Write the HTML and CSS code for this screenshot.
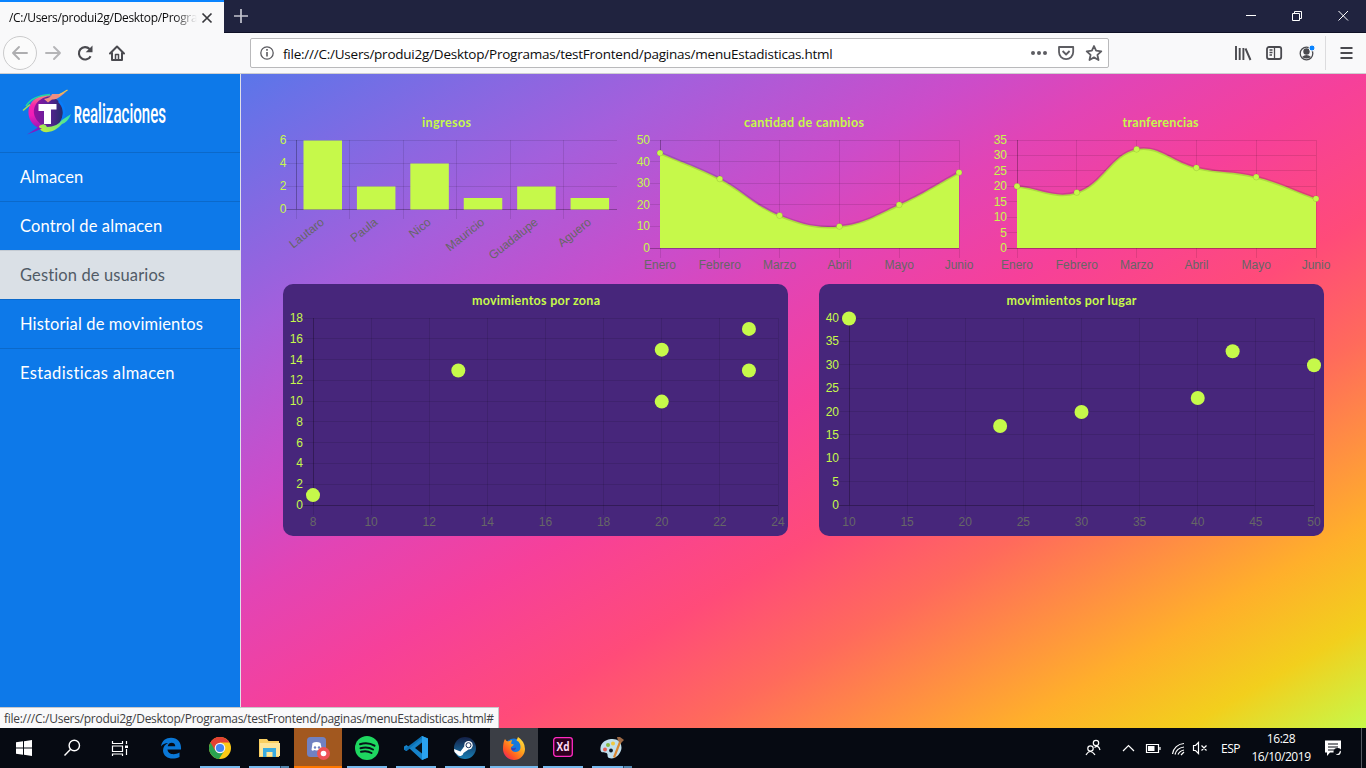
FILE: index.html
```html
<!DOCTYPE html>
<html lang="es">
<head>
<meta charset="utf-8">
<title>menuEstadisticas</title>
<link rel="stylesheet" href="styles.css">
</head>
<body>
<div class="screen">
  <header class="titlebar">
    <div class="tab"><span class="tab-title">/C:/Users/produi2g/Desktop/Progra</span>
      <svg class="tab-close" width="12" height="12" viewBox="0 0 12 12"><path d="M1.5 1.5l9 9M10.5 1.5l-9 9" stroke="#38383d" stroke-width="1.7"/></svg>
    </div>
    <svg class="new-tab" width="14" height="14" viewBox="0 0 14 14"><path d="M7 0v14M0 7h14" stroke="#c4c5cf" stroke-width="1.7"/></svg>
    <svg class="window-buttons" width="104" height="12" viewBox="0 0 104 12" fill="none" stroke="#fff" stroke-width="1"><path d="M0 5.5h10M46.500 3.500h7v7h-7zM48.500 3v-1.500h7v7h-2M92.500 1l9.500 9.500M102 1l-9.500 9.500"/></svg>
  </header>
  <nav class="toolbar">
    <span class="back"><svg width="18" height="18" viewBox="0 0 18 18" fill="none" stroke="#aeaeb0" stroke-width="1.9" stroke-linecap="round" stroke-linejoin="round"><path d="M16 9H2M8 3L2 9l6 6"/></svg></span>
    <svg class="nav-icon forward" width="18" height="18" viewBox="0 0 18 18" fill="none" stroke="#b5b5b7" stroke-width="1.9" stroke-linecap="round" stroke-linejoin="round"><path d="M2 9h14M10 3l6 6-6 6"/></svg>
    <svg class="nav-icon reload" width="18" height="18" viewBox="0 0 18 18"><path d="M14.600 12.200A6.200 6.200 0 1 1 13.600 5" fill="none" stroke="#4a4a4f" stroke-width="2.100"/><path d="M16.500 1.500v6.800H9.700z" fill="#4a4a4f"/></svg>
    <svg class="nav-icon home" width="18" height="18" viewBox="0 0 18 18" fill="none" stroke="#4a4a4f" stroke-width="2" stroke-linejoin="round" stroke-linecap="round"><path d="M2 9.500L9 2.500l7 7M4 8.500v7.500h10V8.500"/><path d="M7.500 15.500v-5h3v5" stroke-width="1.500"/></svg>
    <div class="urlbar">
      <svg class="info" width="14" height="14" viewBox="0 0 14 14"><circle cx="7" cy="7" r="6.200" fill="none" stroke="#5b5b60" stroke-width="1.300"/><path d="M7 6v4.500M7 3v1.700" stroke="#5b5b60" stroke-width="1.600"/></svg>
      <span class="url">file:///C:/Users/produi2g/Desktop/Programas/testFrontend/paginas/menuEstadisticas.html</span>
      <svg class="url-actions" width="74" height="18" viewBox="0 0 74 18" fill="none" stroke="#5d5d62" stroke-width="1.800" stroke-linejoin="round"><g fill="#5d5d62" stroke="none"><circle cx="3" cy="9" r="2"/><circle cx="9" cy="9" r="2"/><circle cx="15" cy="9" r="2"/></g><path d="M29 3h14.200v5a7.100 7.100 0 0 1-14.200 0zM32.600 7l3.500 3.500L39.600 7"/><path d="M64 2l2.100 4.700 5.200.6-3.900 3.500 1.100 5.200L64 13.400 59.500 16l1.100-5.200-3.900-3.500 5.200-.6z"/></svg>
    </div>
    <svg class="tool-icons" width="82" height="18" viewBox="0 0 82 18" fill="none" stroke="#4a4a4f">
      <path d="M2 2v14M5.700 4v12M9.400 4v12M11.500 4.500l5 11.500" stroke-width="1.900"/>
      <rect x="33" y="3" width="14.200" height="12" rx="2" stroke-width="1.800"/><path d="M40.500 3v12M35.500 6h3M35.500 8.500h3M35.500 11h2.500" stroke-width="1.300"/>
      <circle cx="72.500" cy="9.500" r="6.300" stroke-width="1.300"/><circle cx="72.500" cy="7.500" r="3.200" fill="#4a4a4f" stroke="none"/><path d="M68 13q4.500-4 9 0q-4.500 3-9 0z" fill="#4a4a4f" stroke="none"/><circle cx="78" cy="4" r="3" fill="#0a84ff" stroke="#f9f9fa"/>
    </svg>
    <i class="divider"></i>
    <svg class="menu-icon" width="13" height="14" viewBox="0 0 13 14"><path d="M.5 2h12M.5 7h12M.5 12h12" stroke="#4a4a4f" stroke-width="2"/></svg>
  </nav>
  <div class="page">
    <aside class="sidebar">
      <div class="brand">
        <svg width="220" height="60" viewBox="10 82 220 60">
          <defs>
            <linearGradient id="disc" x1="0" x2="1"><stop offset="0" stop-color="#a50c9e"/><stop offset=".5" stop-color="#63209c"/><stop offset="1" stop-color="#242c68"/></linearGradient>
            <linearGradient id="arc" x1="0" x2="0" y1="0" y2="1"><stop offset="0" stop-color="#f58b78"/><stop offset=".3" stop-color="#f424ae"/><stop offset=".6" stop-color="#f01cb8"/><stop offset="1" stop-color="#8f19b7"/></linearGradient>
            <linearGradient id="lime" x1="0" x2="1" y1="1" y2="0"><stop offset="0" stop-color="#c8ec38"/><stop offset="1" stop-color="#25e1b6"/></linearGradient>
          </defs>
          <circle cx="46.500" cy="112.500" r="16.500" fill="url(#disc)"/>
          <path d="M59 101q9 9 2 22" fill="none" stroke="#097df9" stroke-width="2.500"/>
          <path d="M41 129C26 124 25 106 35 99Q43 93 52 96Q42 96 36 104Q29 116 44 127z" fill="url(#arc)"/>
          <path d="M26 106Q32 96 50 94.500" fill="none" stroke="#20d5a6" stroke-width="1.500"/>
          <path d="M23 110.500l7-6" stroke="#a5e054" stroke-width="1.600"/>
          <path d="M44 99q7-1 8-5l7 0 7-2-5 4q-5 4-9 3.500l-4 3z" fill="#ef8e82"/><path d="M59 95l8.500-5" stroke="#f2c54c" stroke-width="1.300"/>
          <path d="M39 126q6-4 8 1 10 0 15-7l9-6q-3 8-9 10-6 7-14 8-8 1-9-6z" fill="url(#lime)"/>
          <path d="M27 134.500l11-7 4 1-7 3z" fill="#821bc2"/>
          <path d="M38.500 104h18v5.500h-5.500v14.500h-7v-13h-5.500z" fill="#fff"/>
          <text class="brand-text" x="74" y="122.500" textLength="92" lengthAdjust="spacingAndGlyphs"><tspan class="brand-initial">R</tspan>ealizaciones</text>
        </svg>
      </div>
      <a class="item">Almacen</a>
      <a class="item">Control de almacen</a>
      <a class="item active">Gestion de usuarios</a>
      <a class="item">Historial de movimientos</a>
      <a class="item last">Estadisticas almacen</a>
    </aside>
    <main class="content">
      <section class="row-top">
        <svg id="ingresos" class="chart" width="357" height="175" viewBox="268 109 357 175"></svg>
        <svg id="cambios" class="chart" width="357" height="175" viewBox="625 109 357 175"></svg>
        <svg id="tranferencias" class="chart" width="357" height="175" viewBox="982 109 357 175"></svg>
      </section>
      <section class="row-bottom">
        <svg id="zona" class="chart card" width="505" height="252" viewBox="283 284 505 252"></svg>
        <svg id="lugar" class="chart card" width="505" height="252" viewBox="819 284 505 252"></svg>
      </section>
    </main>
    <div class="status">file:///C:/Users/produi2g/Desktop/Programas/testFrontend/paginas/menuEstadisticas.html#</div>
  </div>
  <footer class="taskbar">
    <div class="system">
      <span class="sys"><svg width="16" height="16" viewBox="0 0 16 16" fill="#fff"><path d="M0 2.300l7-1v6.300H0zM8 1.200L16 0v7.600H8zM0 8.600h7v6.200l-7-1zM8 8.600h8V16l-8-1.200z"/></svg></span>
      <span class="sys"><svg width="18" height="18" viewBox="0 0 18 18" fill="none" stroke="#fff" stroke-width="1.400"><circle cx="11.300" cy="6.500" r="5.200"/><path d="M7.600 10.200L1.500 16.500"/></svg></span>
      <span class="sys"><svg width="18" height="18" viewBox="0 0 18 18" fill="none" stroke="#fff" stroke-width="1.200"><path d="M1.500 2v2.500h10V2M1.500 7h10v5.500h-10zM1.500 17v-2h10v2M15.500 2v3M15.500 10v6"/><path d="M14 6.500h3v2.500h-3z" fill="#fff" stroke="none"/></svg></span>
    </div>
    <div class="apps">
      <span class="app"><svg width="22" height="22" viewBox="0 0 22 22"><path d="M1 9.500C2 3.500 6 .8 11 .8c7 0 10.500 5 10 11.700H7.500c.3 5 7 6 12 3v4.500C12 23.500 3.500 21 3 13.800c0-4 2.200-6.600 5.200-7.800C4.900 6 2.500 7.500 1 9.500zM7.700 9.200h7.600c0-4.300-6.800-4.700-7.600 0z" fill="#0a78d7" fill-rule="evenodd"/></svg></span>
      <span class="app open"><svg width="22" height="22" viewBox="0 0 22 22"><circle cx="11" cy="11" r="11" fill="#fbc916"/><path d="M11 11L1.500 5.500A11 11 0 0 1 20.500 5.500H11z" fill="#e34133"/><path d="M1.500 5.500A11 11 0 0 0 10 22l5.500-8.400L11 11z" fill="#2aa350"/><path d="M6.300 13.700L1.500 5.500A11 11 0 0 1 11 0v6z" fill="#e34133"/><circle cx="11" cy="11" r="5.300" fill="#f4f4f4"/><circle cx="11" cy="11" r="4.100" fill="#4285f4"/></svg></span>
      <span class="app open stacked"><svg width="22" height="20" viewBox="0 0 22 20"><path d="M1 1h8l1.500 2H21v16H1z" fill="#f9cf61"/><path d="M2 5h20v13H2z" fill="#ffe69a"/><path d="M5 10h13v9h-3.500v-5h-6v5H5z" fill="#3aace0"/></svg></span>
      <span class="app alert"><svg width="24" height="24" viewBox="0 0 24 24"><rect x="1" y="1" width="19" height="20" rx="3.500" fill="#7181c1"/><path d="M5.500 14l1-7q4-1.800 8 0l1.500 7q-2 1.500-3 0-2.500.8-5 0-1 1.500-2.500 0z" fill="#fff"/><circle cx="9" cy="11.500" r="1.200" fill="#7181c1"/><circle cx="13" cy="11.500" r="1.200" fill="#7181c1"/><circle cx="17.500" cy="17.500" r="6.500" fill="#ef5256"/><circle cx="17.500" cy="17.500" r="2.800" fill="#fff"/></svg></span>
      <span class="app open"><svg width="24" height="24" viewBox="0 0 24 24"><circle cx="12" cy="12" r="12" fill="#1ed760"/><path d="M5 8.200q8-2.400 14.500 1.500M5.500 12.200q7-2 12.500 1.300M6 15.800q6-1.500 10.500 1.200" fill="none" stroke="#071118" stroke-width="2" stroke-linecap="round"/></svg></span>
      <span class="app open"><svg width="24" height="24" viewBox="0 0 24 24"><path d="M18 0l6 2.500v19L18 24 5.500 12.500 2.500 15 0 13.700v-3.200L2.500 9l3 2.500z" fill="#1683ca"/><path d="M18 6.500L11 12l7 5.500z" fill="#071018"/><path d="M18 0l6 2.500v19L18 24z" fill="#2aa2ef"/><path d="M0 13.500l2.500 1.500L18 2V0z" fill="#0c72b5"/></svg></span>
      <span class="app open"><svg width="22" height="22" viewBox="0 0 22 22"><defs><linearGradient id="st" x2="0" y2="1"><stop stop-color="#142047"/><stop offset="1" stop-color="#187eb4"/></linearGradient></defs><circle cx="11" cy="11" r="11" fill="url(#st)"/><path d="M0 12l6.500 2.500 4-5.500 4 3.500-5 3.500a3.500 3.500 0 0 1-6.500 1.200L.5 15z" fill="#fff"/><circle cx="14.500" cy="8.200" r="4.200" fill="#fff"/><circle cx="14.500" cy="8.200" r="2.500" fill="none" stroke="#17305a" stroke-width="1"/></svg></span>
      <span class="app open current"><svg width="22" height="23" viewBox="0 0 22 23"><defs><linearGradient id="ff" x1="1" x2=".1" y2="1"><stop stop-color="#fff14c"/><stop offset=".4" stop-color="#ffa71d"/><stop offset=".75" stop-color="#ff5423"/><stop offset="1" stop-color="#e71878"/></linearGradient></defs><circle cx="11" cy="11" r="9.500" fill="#1779dd"/><path d="M2 2q1 2 3 2.500Q8 3 9 3L8 6.500l3 1.300-3 2.400q0 5 5 4.800 6-1 4-8-1-3-3.500-3.500L15 0q7 4.500 7 12a11 11 0 0 1-22 0Q0 5 2 2z" fill="url(#ff)"/><path d="M8 10.500q2 1.500 5 0 0 2.500-3 3-2-.5-2-3z" fill="#3940b9"/></svg></span>
      <span class="app open"><svg class="raised" width="20" height="20" viewBox="0 0 20 20"><rect x=".7" y=".7" width="18.600" height="18.600" rx="2.500" fill="#2e001e" stroke="#ff2bc2" stroke-width="1.300"/><text class="xd" x="10" y="14" text-anchor="middle" textLength="13" lengthAdjust="spacingAndGlyphs">Xd</text></svg></span>
      <span class="app open stacked"><svg width="24" height="24" viewBox="0 0 24 24"><path d="M11 3C3 4 0 9 .5 14c.5 3.500 3.500 2 6 3 2 1.500 0 3.500 2.500 5 6 2 12-4 12.500-10C21.500 5 17 2.500 11 3z" fill="#c0dfed"/><circle cx="5" cy="13.500" r="2" fill="#e46053"/><circle cx="8" cy="9" r="2" fill="#85ba42"/><circle cx="13" cy="7.500" r="2" fill="#f0c93e"/><circle cx="11" cy="14.500" r="1.900" fill="#101a24"/><path d="M20 3l2 1-7 18-2-1z" fill="#da8732"/><path d="M17 1l3 0 4 3-3 3-3-2z" fill="#9b6946"/></svg></span>
    </div>
    <div class="tray">
      <svg class="tray-icons" width="128" height="24" viewBox="1085 736 128 24" fill="none" stroke="#fff" stroke-width="1.200">
        <circle cx="1096" cy="743" r="2.700"/><circle cx="1090.500" cy="748.500" r="2.700"/><path d="M1086 755q4-7 9 0M1094.500 747.500q4-3 5.500 2.500"/>
        <path d="M1123 751l5.500-5.500 5.500 5.500"/>
        <path d="M1146.500 744.500h12v8h-12zM1160 747v3"/><path d="M1148 746h6.500v5h-6.500z" fill="#fff" stroke="none"/>
        <path d="M1172.500 754A12 12 0 0 1 1184 743.500M1175 754.500q1.500-6.500 9-7.500M1178 754.500q1.500-3.500 6-4.500M1181 755l3-3"/>
        <path d="M1193.500 745.500h2l3-3v11l-3-3h-2zM1201.500 745.500l5 5M1206.500 745.500l-5 5"/>
      </svg>
      <span class="lang">ESP</span>
      <div class="clock"><span>16:28</span><span class="date">16/10/2019</span></div>
      <svg class="notes" width="17" height="17" viewBox="0 0 17 17"><path d="M0 .5h16v12H5L2 16v-3.500H0z" fill="#fff"/><path d="M3 4h10M3 7h10M3 10h6" stroke="#060a12" stroke-width="1.200"/><circle cx="12.500" cy="12" r="4" fill="#060a12"/><path d="M10 13.500q4 2 5-3l1 1q-1 6-6 2z" fill="#fff"/></svg>
      <i class="peek"></i>
    </div>
  </footer>
</div>
<script src="charts.js"></script>
</body>
</html>
```

FILE: styles.css
```css
* { box-sizing: border-box; }
body { margin: 0; overflow: hidden; font-family: "Open Sans", "Noto Sans", sans-serif; }
svg { display: block; flex: none; }
.screen { width: 1366px; height: 768px; display: flex; flex-direction: column; }

.titlebar { height: 33px; flex: none; display: flex; align-items: center; background: #20233f; border-bottom: 1px solid #0f1126; }
.tab { width: 224px; height: 33px; align-self: flex-start; padding-left: 9px; display: flex; align-items: center; background: #f9f9fa; border-top: 2px solid #0a84ff; }
.tab-title { width: 188px; overflow: hidden; white-space: nowrap; font-size: 12px; letter-spacing: -.32px; color: #0c0c0d; -webkit-mask-image: linear-gradient(to right, #000 165px, transparent); mask-image: linear-gradient(to right, #000 165px, transparent); }
.tab-close { margin-left: 4px; }
.new-tab { margin-left: 10px; }
.window-buttons { margin: 0 16px 0 auto; }

.toolbar { height: 41px; flex: none; display: flex; align-items: center; background: #f9f9fa; border-bottom: 1px solid #cfcfd1; }
.back { width: 34px; height: 34px; margin-left: 3px; display: flex; align-items: center; justify-content: center; border: 1px solid #cbcbcc; border-radius: 50%; background: #fbfbfb; }
.forward { margin-left: 7px; }
.reload { margin-left: 14px; }
.home { margin-left: 14px; }
.urlbar { width: 859px; height: 30px; margin-left: 124px; padding: 0 4px 0 9px; display: flex; align-items: center; background: #fff; border: 1px solid #b9b9bb; border-radius: 2px; }
.url { margin-left: 9px; padding-top: 2px; font-size: 13.500px; letter-spacing: -.235px; white-space: nowrap; color: #0c0c0d; }
.url-actions { margin-left: auto; }
.tool-icons { margin-left: 125px; }
.divider { width: 1px; height: 34px; margin-left: 9px; background: #dcdcde; }
.menu-icon { margin-left: 14px; }

.page { position: relative; height: 654px; display: flex; }
.sidebar { width: 241px; flex: none; background: #0d79e9; border-right: 1px solid #dfdfe8; display: flex; flex-direction: column; }
.brand { height: 78px; padding: 8px 0 0 10px; }
.brand-text { fill: #fff; font: 500 28px "Roboto", sans-serif; }
.brand-initial { font-size: 23px; font-weight: 700; }
.item { height: 49px; padding-left: 20px; line-height: 49px; border-top: 1px solid #0b69ca; color: #fff; font-family: "Lato", sans-serif; font-size: 16.500px; letter-spacing: .12px; white-space: nowrap; }
.active { background: #dae0e6; color: #515b66; border-top-color: #c4cbd3; }
.last { letter-spacing: .35px; }

.content { flex: 1; padding: 35px 0 0 27px;
  background: linear-gradient(to bottom right, #5a76e9 0%, #6a71e7 4%, #a45fdc 20%, #cc4cc9 33%, #e244b5 40%, #f6409a 50%, #ff4b79 61%, #ff6a5c 70%, #ffaf2b 84.300%, #f2cf1d 92%, #c6f94a 100%); }
.row-top { display: flex; }
.row-bottom { display: flex; gap: 31px; padding-left: 15px; }
.chart { overflow: visible; }
.card { background: #47267b; border-radius: 10px; }
.chart text { font: 12px "Liberation Sans", Arial, sans-serif; fill: #666; }
.chart .y { fill: #c6f94a; }
.chart .title { font: 700 12.500px "Lato", sans-serif; fill: #c6f94a; }
.grid { stroke: #000; stroke-opacity: .1; }
.zero { stroke: #000; stroke-opacity: .28; }
.fill { fill: #c6f94a; }
.curve { fill: none; stroke: #000; stroke-opacity: .12; stroke-width: 3; }
.mark { fill: #c6f94a; stroke: #000; stroke-opacity: .1; }

.status { position: absolute; left: 0; bottom: 0; width: 499px; height: 21px; padding-left: 4px; line-height: 21px; background: #f9f9fa; border-top: 1px solid #c8c8ca; border-right: 1px solid #c8c8ca; color: #3e3e42; font-size: 12px; letter-spacing: -.28px; white-space: nowrap; overflow: hidden; }

.taskbar { height: 40px; flex: none; display: flex; background: #060a12; color: #fff; }
.system { display: flex; margin-right: 3px; }
.sys { width: 48px; display: flex; align-items: center; justify-content: center; }
.apps { display: flex; gap: 1px; }
.app { width: 48px; height: 40px; display: flex; align-items: center; justify-content: center; }
.open { background: linear-gradient(#76b9ed, #76b9ed) 4px 38px / 40px 2px no-repeat; }
.stacked { background: linear-gradient(to right, #76b9ed 31px, #234767 31px, #234767 32px, #5185ad 32px) 4px 38px / 40px 2px no-repeat; }
.current { background: linear-gradient(#3b3e45 38px, #76b9ed 38px); }
.alert { background: linear-gradient(#a2581f 38px, #ff7800 38px); }
.raised { margin-bottom: 2px; }
.xd { font: 700 12px "Open Sans", sans-serif; fill: #ffd9f3; }
.tray { margin-left: auto; display: flex; align-items: center; }
.lang { margin-left: 8px; width: 31px; font-size: 12px; letter-spacing: -.5px; }
.clock { width: 58px; display: flex; flex-direction: column; align-items: center; font-size: 12px; line-height: 18px; letter-spacing: -.45px; }
.notes { margin-left: 15px; }
.peek { width: 1px; height: 40px; margin: 0 4px 0 19px; background: #555961; }
```

FILE: charts.js
```javascript
const add = (svg, tag, attrs, text) => {
  const el = document.createElementNS("http://www.w3.org/2000/svg", tag);
  for (const k in attrs) el.setAttribute(k, attrs[k]);
  if (text !== undefined) el.textContent = text;
  svg.appendChild(el);
  return el;
};
const snap = v => Math.floor(v) + 0.5;

function frame(svg, c) {
  add(svg, "text", { class: "title", x: c.center, y: c.top - 13.5, "text-anchor": "middle", textLength: c.titleWidth }, c.title);
  for (let i = 0; i <= c.ySteps; i++) {
    const y = c.bottom - (c.bottom - c.top) * i / c.ySteps;
    add(svg, "path", { class: i ? "grid" : "zero", d: `M${c.left - 10} ${snap(y)}H${c.right}` });
    add(svg, "text", { class: "y", x: c.left - 10, y: Math.round(y) + 4, "text-anchor": "end" }, i * c.yStep);
  }
  const n = c.bars ? c.xLabels.length : c.xLabels.length - 1;
  c.xLabels.forEach((label, i) => {
    const x = c.left + (c.right - c.left) * i / n;
    add(svg, "path", { class: i ? "grid" : "zero", d: `M${snap(x)} ${c.top}V${c.bottom + (i ? 10 : 0)}` });
    if (!i) add(svg, "path", { class: "grid", d: `M${snap(x)} ${c.bottom}v10` });
    if (c.bars) {
      const tx = x + 28.5, ty = c.bottom + 14.5;
      add(svg, "text", { x: tx, y: ty, "text-anchor": "end", transform: `rotate(-38.5 ${tx} ${ty})` }, label);
    } else {
      add(svg, "text", { x, y: c.bottom + 21, "text-anchor": "middle" }, label);
    }
  });
}

function bars(id, c) {
  const svg = document.getElementById(id);
  frame(svg, c);
  const step = (c.right - c.left) / c.data.length;
  c.data.forEach((v, i) => {
    const h = (c.bottom - c.top) * v / (c.yStep * c.ySteps);
    add(svg, "rect", { class: "fill", x: c.left + step * i + 7, y: c.bottom - h + .5, width: 38.5, height: h });
  });
}

function area(id, c) {
  const svg = document.getElementById(id);
  frame(svg, c);
  const p = c.data.map((v, i) => [c.left + (c.right - c.left) * i / (c.data.length - 1), c.bottom - (c.bottom - c.top) * v / (c.yStep * c.ySteps)]);
  const controls = p.map((q, i) => {
    const a = p[i - 1] || q, b = p[i + 1] || q;
    const d1 = Math.hypot(q[0] - a[0], q[1] - a[1]), d2 = Math.hypot(b[0] - q[0], b[1] - q[1]);
    const f1 = .4 * d1 / (d1 + d2), f2 = .4 * d2 / (d1 + d2);
    return { prev: [q[0] - f1 * (b[0] - a[0]), q[1] - f1 * (b[1] - a[1])], next: [q[0] + f2 * (b[0] - a[0]), q[1] + f2 * (b[1] - a[1])] };
  });
  let d = `M${p[0]}`;
  for (let i = 1; i < p.length; i++) d += `C${controls[i - 1].next} ${controls[i].prev} ${p[i]}`;
  add(svg, "path", { class: "fill", d: `${d}V${c.bottom}H${c.left}Z` });
  add(svg, "path", { class: "curve", d });
  p.forEach(q => add(svg, "circle", { class: "mark", cx: q[0], cy: q[1], r: 3 }));
}

function scatter(id, c) {
  const svg = document.getElementById(id);
  frame(svg, c);
  c.data.forEach(([x, y]) => add(svg, "circle", {
    class: "fill", r: 7,
    cx: c.left + (c.right - c.left) * (x - c.xMin) / (c.xMax - c.xMin),
    cy: c.bottom + .5 - (c.bottom - c.top) * y / (c.yStep * c.ySteps)
  }));
}

const months = ["Enero", "Febrero", "Marzo", "Abril", "Mayo", "Junio"];
bars("ingresos", { title: "ingresos", titleWidth: 49, center: 446.5, left: 296.5, right: 617, top: 140, bottom: 209, ySteps: 3, yStep: 2, bars: true, xLabels: ["Lautaro", "Paula", "Nico", "Mauricio", "Guadalupe", "Aguero"], data: [6, 2, 4, 1, 2, 1] });
area("cambios", { title: "cantidad de cambios", titleWidth: 120, center: 804, left: 660, right: 959, top: 140, bottom: 248, ySteps: 5, yStep: 10, xLabels: months, data: [44, 32, 15, 10, 20, 35] });
area("tranferencias", { title: "tranferencias", titleWidth: 76, center: 1160.5, left: 1017, right: 1316, top: 140, bottom: 248, ySteps: 7, yStep: 5, xLabels: months, data: [20, 18, 32, 26, 23, 16] });
scatter("zona", { title: "movimientos por zona", titleWidth: 128, center: 536, left: 313, right: 778, top: 318, bottom: 505, ySteps: 9, yStep: 2, xMin: 8, xMax: 24, xLabels: [8, 10, 12, 14, 16, 18, 20, 22, 24], data: [[8, 1], [13, 13], [20, 15], [20, 10], [23, 17], [23, 13]] });
scatter("lugar", { title: "movimientos por lugar", titleWidth: 130, center: 1071.5, left: 849, right: 1314, top: 318, bottom: 505, ySteps: 8, yStep: 5, xMin: 10, xMax: 50, xLabels: [10, 15, 20, 25, 30, 35, 40, 45, 50], data: [[10, 40], [23, 17], [30, 20], [40, 23], [43, 33], [50, 30]] });
```
